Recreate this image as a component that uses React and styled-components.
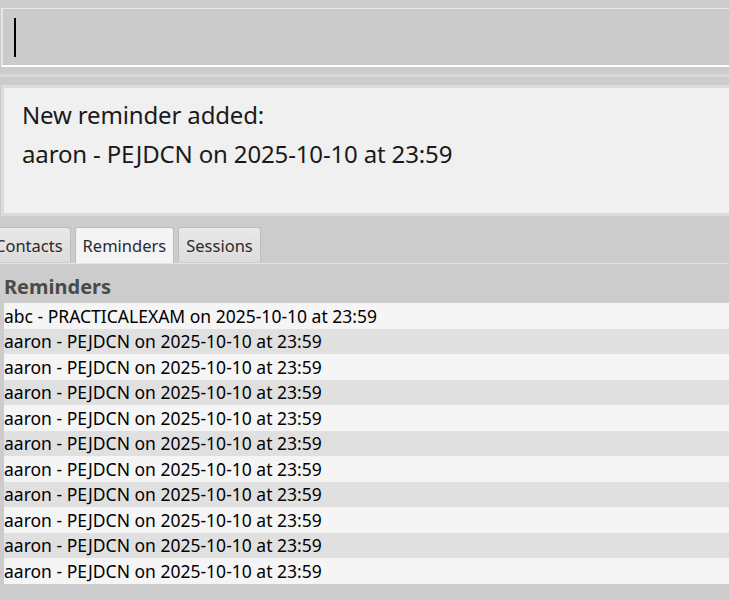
import React from "react";
import styled, { createGlobalStyle } from "styled-components";

const Global = createGlobalStyle`
  html, body { margin: 0; padding: 0; background: #cccccc; overflow: hidden; }
  body { font-family: "Segoe UI", "Noto Sans", "Open Sans", sans-serif; }
`;

const Page = styled.div`
  width: 729px;
  height: 600px;
  display: flex;
  flex-direction: column;
  background: #cccccc;
  overflow: hidden;
`;

const CommandArea = styled.div`
  padding: 8px 0 0 1px;
  height: 68px;
  box-sizing: border-box;
`;

const CommandBox = styled.div`
  height: 59px;
  box-sizing: border-box;
  border-top: 1px solid #e9e9e9;
  border-left: 2px solid #e4e4e4;
  border-bottom: 2px solid #ffffff;
  background: #cbcbcb;
  display: flex;
  align-items: center;
  padding-left: 11px;
`;

const Caret = styled.div`
  width: 1.5px;
  height: 39px;
  background: #000;
`;

const Divider = styled.div`
  height: 17px;
  display: flex;
  flex-direction: column;
  padding-top: 6px;
  box-sizing: border-box;
`;

const DividerLine = styled.div`
  height: 3px;
  background: #dadada;
`;

const ResultArea = styled.div`
  padding: 0 0 0 1px;
  height: 131px;
  box-sizing: border-box;
`;

const ResultBox = styled.div`
  height: 100%;
  box-sizing: border-box;
  border: 3px solid #dcdcdc;
  border-right: none;
  background: #f0f0f0;
  padding: 7px 0 0 18px;
  color: #1a1a1a;
  font-size: 24px;
  line-height: 39px;
  font-weight: 400;
  letter-spacing: -0.15px;
`;

const TabBar = styled.div`
  margin-top: 10px;
  height: 38px;
  display: flex;
  align-items: flex-end;
  gap: 4px;
  border-bottom: 1px solid #e4e4e4;
  box-sizing: border-box;
  padding-bottom: 1px;
`;

const Tab = styled.div`
  height: ${(p) => (p.$active ? "36px" : "35px")};
  box-sizing: border-box;
  padding: 0 7px;
  display: flex;
  align-items: center;
  font-size: 16.5px;
  color: #2b2b2b;
  border: 1px solid #bdbdbd;
  border-bottom: none;
  border-radius: 3px 3px 0 0;
  background: ${(p) =>
    p.$active ? "#f4f4f4" : "linear-gradient(#e8e8e8, #dcdcdc)"};
  margin-left: ${(p) => (p.$first ? "-13px" : "0")};
  margin-bottom: ${(p) => (p.$active ? "-1px" : "0")};
`;

const ListPanel = styled.div`
  flex: 1;
  display: flex;
  flex-direction: column;
  padding: 0 0 0 4px;
`;

const Heading = styled.div`
  height: 39px;
  display: flex;
  align-items: center;
  padding-top: 6px;
  box-sizing: border-box;
  font-size: 20px;
  font-weight: 700;
  color: #4a4a4a;
`;

const Row = styled.div`
  height: 25.5px;
  display: flex;
  align-items: center;
  font-size: 17.5px;
  color: #000;
  background: ${(p) => (p.$odd ? "#e0e0e0" : "#f5f5f5")};
  white-space: nowrap;
`;

const rows = [
  "abc - PRACTICALEXAM on 2025-10-10 at 23:59",
  ...Array.from({ length: 10 }, () => "aaron - PEJDCN on 2025-10-10 at 23:59"),
];

export default function App() {
  return (
    <Page>
      <Global />
      <CommandArea>
        <CommandBox>
          <Caret />
        </CommandBox>
      </CommandArea>
      <Divider>
        <DividerLine />
      </Divider>
      <ResultArea>
        <ResultBox>
          <div>New reminder added:</div>
          <div>aaron - PEJDCN on 2025-10-10 at 23:59</div>
        </ResultBox>
      </ResultArea>
      <TabBar>
        <Tab $first>Contacts</Tab>
        <Tab $active>Reminders</Tab>
        <Tab>Sessions</Tab>
      </TabBar>
      <ListPanel>
        <Heading>Reminders</Heading>
        {rows.map((r, i) => (
          <Row key={i} $odd={i % 2 === 1}>
            {r}
          </Row>
        ))}
      </ListPanel>
    </Page>
  );
}
